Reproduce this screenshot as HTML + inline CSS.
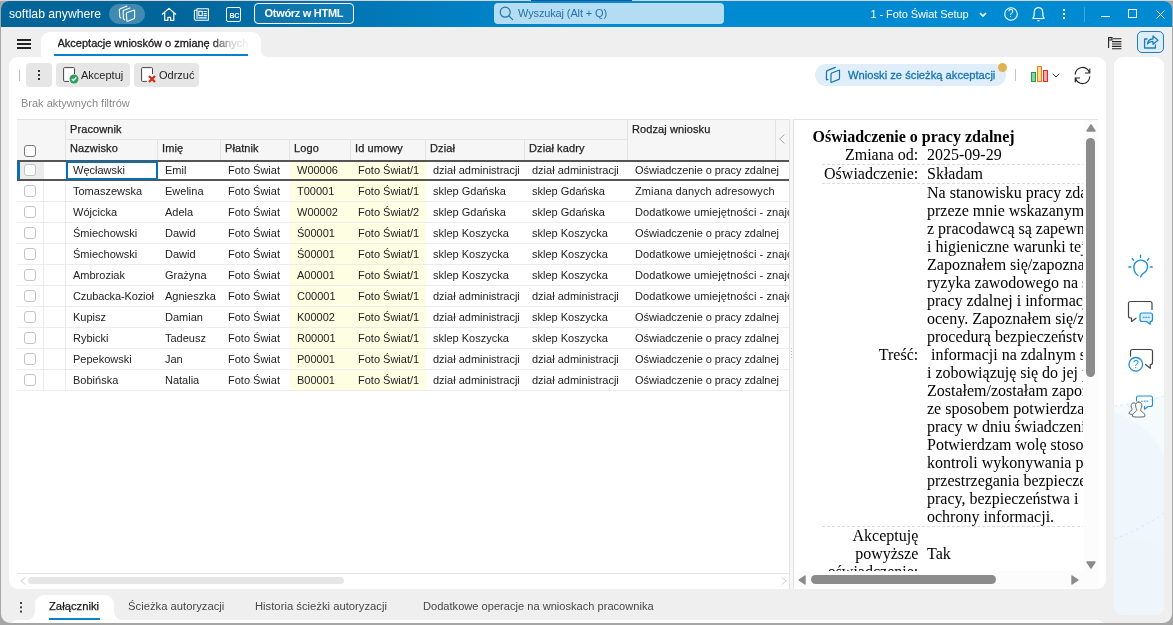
<!DOCTYPE html>
<html lang="pl">
<head>
<meta charset="utf-8">
<title>softlab anywhere</title>
<style>
*{box-sizing:border-box;margin:0;padding:0}
html,body{width:1173px;height:625px;overflow:hidden;background:#a6a6a6}
body{font-family:"Liberation Sans",sans-serif;font-size:11px;color:#222;position:relative}
.abs{position:absolute}
#win{will-change:transform;position:absolute;left:1px;top:1px;width:1171px;height:622px;background:#efefef;border-radius:8px 8px 9px 9px;overflow:hidden;}
#hdr{position:absolute;left:0;top:0;width:1171px;height:26px;background:linear-gradient(90deg,#02659a 0,#02659a 170px,#008ad2 570px,#008ad2 100%)}
#hdr .t{position:absolute;color:#fff;white-space:nowrap}
svg{position:absolute;overflow:visible}
.panel{position:absolute;background:#fff;border-radius:9px}
.tbtn{position:absolute;top:62px;height:24px;background:#e6e6e6;border-radius:4px;font-size:11px;color:#222;white-space:nowrap}
.tbtn span{position:absolute;top:6px}
/* grid */
#grid{position:absolute;left:16px;top:118px;width:773px;height:272px;font-size:11px}
.hc{position:absolute;-webkit-text-stroke:.25px #222;letter-spacing:.1px;background:#f6f6f6;border-right:1px solid #e3e3e3;border-bottom:1px solid #e3e3e3;color:#222;white-space:nowrap;overflow:hidden;padding-left:4px}
.row{position:absolute;left:0;width:773px;height:21px;border-bottom:1px solid #ececec;background:#fff}
.c{position:absolute;top:0;height:20px;line-height:20px;white-space:nowrap;overflow:hidden;padding-left:7px;color:#222}
.y{background:#fefee2}
.cb{position:absolute;left:7px;top:4px;width:12px;height:12px;border:1px solid #c4c4c4;border-radius:3px;background:#fff}
.btab{position:absolute;top:599px;font-size:11.25px;color:#484848;white-space:nowrap}
/* doc */
#doc{position:absolute;left:793px;top:119px;width:289px;height:451px;overflow:hidden;font-family:"Liberation Serif",serif;font-size:16px;color:#000;line-height:18px;background:#fff}
#doc .l{position:absolute;right:164.75px;text-align:right;white-space:nowrap}
#doc .v{position:absolute;left:133px;white-space:nowrap}
#doc .d{position:absolute;left:28px;width:270px;height:1px;background:repeating-linear-gradient(90deg,#dcdcdc 0,#dcdcdc 3px,transparent 3px,transparent 5px)}
</style>
</head>
<body>
<div class="abs" style="left:0;top:0;width:1173px;height:1px;background:linear-gradient(90deg,#d6d3d0 0,#d6d3d0 531px,#1d5596 531px,#1d5596 632px,#d6d3d0 632px)"></div>
<div id="win">
  <div id="hdr">
    <div class="t" style="left:8px;top:6px;font-size:12.2px">softlab anywhere</div>
    <div class="abs" style="left:108px;top:3px;width:36px;height:20px;border-radius:10px;background:rgba(255,255,255,.25)"></div>
    <svg style="left:0;top:0" width="150" height="26" viewBox="1 1 150 26" fill="none" stroke="#fff" stroke-width="1.1" stroke-linejoin="round" stroke-linecap="round">
      <path d="M126.9 6.1 L120.3 8.7 Q119.2 9.2 119.3 10.3 L119.8 16.8 Q119.9 17.8 121 18"/>
      <path d="M129.9 8 L124 10.3 Q123 10.8 123.1 11.8 L123.4 18.4 Q123.5 19.5 124.8 19.7"/>
      <path d="M127.2 12.5 L133.6 10.2 Q134.6 9.9 134.6 11 L134.6 17.7 Q134.6 18.5 133.8 18.8 L127.8 21.2 Q126.9 21.5 126.8 20.5 L126.3 13.7 Q126.2 12.8 127.2 12.5 Z"/>
    </svg>
    <svg style="left:0;top:0" width="260" height="26" viewBox="1 1 260 26" fill="none" stroke="#fff" stroke-width="1.2" stroke-linejoin="round" stroke-linecap="round">
      <path d="M162.3 14.2 L169 8.4 L175.7 14.2 M164.7 13 V20.3 H167.9 V17.3 H170.6 V20.3 H173.8 V13"/>
      <path d="M197 8.7 H208.4 V20.3 H195.8 A1.6 1.6 0 0 1 194.4 18.8 V10.3 H197 M197 8.7 V18.5" stroke-width="1.1"/>
      <rect x="198.8" y="11.3" width="3.4" height="4.3" stroke-width="1.1" stroke-linejoin="miter"/>
      <path d="M203.6 11.5 H206.8 M203.6 13.6 H206.8 M203.6 15.7 H206.8 M198.3 17.9 H206.8" stroke-width="1.2" stroke-linecap="butt"/>
    </svg>
    <div class="abs" style="left:225px;top:6px;width:15px;height:15px;border:1.2px solid #fff;border-radius:2px"></div>
    <div class="t" style="left:228.5px;top:10.5px;font-size:7px;font-weight:bold;letter-spacing:-.3px">BC</div>
    <div class="abs" style="left:253px;top:2px;width:100px;height:21px;border:1px solid #fff;border-radius:4px;background:rgba(255,255,255,.05)"></div>
    <div class="t" style="left:263.5px;top:6px;font-size:11px;font-weight:bold;letter-spacing:-.29px">Otwórz w HTML</div>
    <div class="abs" style="left:493px;top:2px;width:230px;height:21px;border-radius:4px;background:#b4dcf3"></div>
    <svg style="left:498px;top:5px" width="15" height="15" viewBox="0 0 15 15" fill="none" stroke="#2773a8" stroke-width="1.2" stroke-linecap="round">
      <circle cx="6.2" cy="6.2" r="5"/><path d="M9.9 9.9 L13.6 13.6"/>
    </svg>
    <div class="t" style="left:517px;top:6px;font-size:11px;color:#2773a8;letter-spacing:-.13px">Wyszukaj (Alt + Q)</div>
    <div class="t" style="left:869.5px;top:7px;font-size:11px;letter-spacing:-.08px">1 - Foto Świat Setup</div>
    <svg style="left:978px;top:11px" width="8" height="6" viewBox="0 0 8 6" fill="none" stroke="#fff" stroke-width="1.6"><path d="M1 1 L4 4 L7 1"/></svg>
    <svg style="left:1003px;top:6px" width="14" height="14" viewBox="0 0 14 14" fill="none" stroke="#fff" stroke-width="1.1"><circle cx="7" cy="7" r="6.3"/></svg>
    <div class="t" style="left:1007px;top:7px;font-size:10px">?</div>
    <svg style="left:1031px;top:5px" width="13" height="17" viewBox="0 0 13 17" fill="none" stroke="#fff" stroke-width="1.2" stroke-linejoin="round">
      <path d="M1 12.5 H12 V12 C10.8 11 10.8 9.5 10.8 7 C10.8 3.8 9 1.6 6.5 1.6 C4 1.6 2.2 3.8 2.2 7 C2.2 9.5 2.2 11 1 12 Z"/>
      <path d="M5.5 14.6 H7.5" stroke-width="1.4"/>
    </svg>
    <div class="abs" style="left:1062px;top:8px;width:2px;height:2px;background:#fff;box-shadow:0 4px 0 #fff,0 8px 0 #fff"></div>
    <div class="abs" style="left:1083px;top:6px;width:1px;height:15px;background:rgba(255,255,255,.25)"></div>
    <div class="abs" style="left:1100px;top:15px;width:9px;height:1px;background:#fff"></div>
    <div class="abs" style="left:1127px;top:8px;width:9px;height:9px;border:1px solid #fff"></div>
    <svg style="left:1155px;top:9px" width="9" height="9" viewBox="0 0 9 9" stroke="#fff" stroke-width="1"><path d="M0.5 0.5 L8.5 8.5 M8.5 0.5 L0.5 8.5"/></svg>
  </div>
  <!--TABS-->
  <div class="abs" style="left:16px;top:38px;width:14px;height:2px;background:#222;box-shadow:0 4px 0 #222,0 8px 0 #222"></div>
  <div class="abs" style="left:40px;top:31px;width:220px;height:30px;background:#fff;border-radius:9px 9px 0 0"></div>
  <div class="abs" style="left:260px;top:50px;width:6px;height:6px;background:radial-gradient(circle at 100% 0,#efefef 5.5px,#fff 6px)"></div>
  <div class="abs" id="tabt" style="left:56.5px;top:36px;font-size:11px;color:#1a1a1a;white-space:nowrap;-webkit-text-stroke:.3px #1a1a1a;width:192px;overflow:hidden;-webkit-mask-image:linear-gradient(90deg,#000 0,#000 80%,rgba(0,0,0,.25) 90%,rgba(0,0,0,.03) 100%)">Akceptacje wniosków o zmianę danych</div>
  <div class="abs" style="left:53px;top:53px;width:194px;height:2px;background:#0a80c8"></div>
  <svg style="left:1107.2px;top:36.3px" width="14" height="13" viewBox="0 0 14 13" fill="none" stroke="#222" stroke-width="1.1">
    <path d="M0.6 11 V0.6 H4 V3 H0.6 M5 1.8 H13.4 M4 4.6 H13.4 M4 7 H13.4 M4 9.4 H13.4 M4 11.8 H13.4"/>
  </svg>
  <div class="abs" style="left:1136px;top:30px;width:27px;height:22px;border:1px solid #1b7fbd;border-radius:5px;background:#dcedf8"></div>
  <svg style="left:1142px;top:33px" width="16" height="15" viewBox="0 0 16 15" fill="none" stroke="#1b7fbd" stroke-width="1.3" stroke-linejoin="round">
    <path d="M4.5 5 H1.6 V14 H12.4 V10.5"/>
    <path d="M4.6 10 C4.8 6.5 7 5 10 5 V2 L15 6.2 L10 10.2 V7.4 C7.6 7.4 6 8 4.6 10 Z"/>
  </svg>
  <!--MAIN-->
  <div class="panel" style="left:8px;top:56px;width:1097px;height:532px"></div>
  <div class="panel" style="left:1113px;top:56px;width:50px;height:558px;overflow:hidden">
    <svg style="left:0;top:0" width="50" height="558" viewBox="1114 57 50 558" fill="none">
      <path d="M1114 406 Q1140 403 1164 396 V615 H1114 Z" fill="#f5fafd"/>
      <path d="M1114 412 Q1150 425 1164 456 V615 H1114 Z" fill="#f0f7fc"/>
      <path d="M1114 534 Q1140 538 1164 548 V615 H1114 Z" fill="#eef6fc"/>
      <path d="M1114 406 Q1140 403 1164 396" stroke="#d3e9f6" stroke-width="1" stroke-dasharray="3 3"/>
      <path d="M1114 539 Q1140 530 1164 513" stroke="#d3e9f6" stroke-width="1" stroke-dasharray="3 3"/>
    </svg>
  </div>
  <!--TOOLBAR-->
  <div class="abs" style="left:18px;top:69px;width:1px;height:11px;background:#bbb"></div>
  <div class="tbtn" style="left:25px;width:26px"></div>
  <div class="abs" style="left:37px;top:69px;width:2px;height:2px;background:#333;box-shadow:0 4px 0 #333,0 8px 0 #333"></div>
  <div class="tbtn" style="left:55px;width:74px"><span style="left:25px">Akceptuj</span></div>
  <svg style="left:62px;top:66px" width="16" height="17" viewBox="0 0 16 17" fill="none">
    <rect x="0.6" y="0.6" width="10.9" height="13.8" rx="1" fill="#fff"/><path d="M11.5 7 V1.6 A1 1 0 0 0 10.5 0.6 H1.6 A1 1 0 0 0 0.6 1.6 V13.4 A1 1 0 0 0 1.6 14.4 H6" stroke="#444" stroke-width="1"/>
    <circle cx="11" cy="12" r="4.5" fill="#2e9e5b"/>
    <path d="M8.8 12 L10.4 13.6 L13.3 10.5" stroke="#fff" stroke-width="1.4"/>
  </svg>
  <div class="tbtn" style="left:133px;width:65px"><span style="left:25px">Odrzuć</span></div>
  <svg style="left:140px;top:66px" width="16" height="17" viewBox="0 0 16 17" fill="none">
    <rect x="0.6" y="0.6" width="10.9" height="13.8" rx="1" fill="#fff"/><path d="M11.5 7 V1.6 A1 1 0 0 0 10.5 0.6 H1.6 A1 1 0 0 0 0.6 1.6 V13.4 A1 1 0 0 0 1.6 14.4 H6" stroke="#444" stroke-width="1"/>
    <path d="M8 9 L14 15 M14 9 L8 15" stroke="#d22e18" stroke-width="2.2"/>
  </svg>
  <div class="abs" style="left:813.5px;top:63px;width:191px;height:22px;border-radius:11px;background:#dfeef8"></div>
  <svg style="left:0;top:0" width="900" height="100" viewBox="1 1 900 100" fill="none" stroke="#1474b4" stroke-width="1.2" stroke-linejoin="round" stroke-linecap="round">
    <path d="M835.3 67.4 L827.3 70.6 Q826.5 71 826.5 71.9 L826.4 79.2 Q826.4 80 827.2 79.7 L828 79.4"/>
    <path d="M831.8 73 L838.8 70.2 Q839.5 69.9 839.5 70.7 L839.5 78.4 Q839.5 79.1 838.8 79.4 L831.7 82.3 Q830.9 82.6 830.9 81.8 L831.1 74 Q831.1 73.3 831.8 73 Z"/>
  </svg>
  <div class="abs" style="left:847px;top:67.6px;font-size:11.2px;color:#1474b4;white-space:nowrap;-webkit-text-stroke:.3px #1474b4">Wnioski ze ścieżką akceptacji</div>
  <div class="abs" style="left:997px;top:62px;width:9px;height:9px;border-radius:50%;background:#e0b252"></div>
  <div class="abs" style="left:1014px;top:68px;width:1px;height:12px;background:#c8c8c8"></div>
  <div class="abs" style="left:1030px;top:71px;width:5px;height:10px;border:1px solid #13a04a;background:#8fd0a3"></div>
  <div class="abs" style="left:1036px;top:65px;width:5px;height:16px;border:1px solid #ef7d1a;background:#fbe08a"></div>
  <div class="abs" style="left:1042px;top:69px;width:5px;height:12px;border:1px solid #e22a2a;background:#f2a9a9"></div>
  <svg style="left:1051px;top:72px" width="8" height="5" viewBox="0 0 8 5" fill="none" stroke="#333" stroke-width="1"><path d="M0.7 0.7 L4 4 L7.3 0.7"/></svg>
  <svg style="left:1073px;top:66px" width="17" height="17" viewBox="0 0 17 17" fill="none" stroke="#222" stroke-width="1.1">
    <path d="M1.2 7.5 A7.3 7.3 0 0 1 15.6 6 M15.8 1.5 V6 H11"/>
    <path d="M15.8 9.5 A7.3 7.3 0 0 1 1.4 11 M1.2 15.5 V11 H6"/>
  </svg>
  <div class="abs" style="left:20px;top:96px;font-size:11px;color:#8a8a8a;white-space:nowrap">Brak aktywnych filtrów</div>
  <!--GRID-->
  <div id="grid">
  <div class="hc" style="left:0;top:0;width:49px;height:42px;border-top:1px solid #e3e3e3"></div>
  <div class="hc" style="left:49px;top:0;width:562px;height:21px;border-top:1px solid #e3e3e3;line-height:19px">Pracownik</div>
  <div class="hc" style="left:49px;top:21px;width:92px;height:21px;line-height:17px">Nazwisko</div>
  <div class="hc" style="left:141px;top:21px;width:63px;height:21px;line-height:17px">Imię</div>
  <div class="hc" style="left:204px;top:21px;width:69px;height:21px;line-height:17px">Płatnik</div>
  <div class="hc" style="left:273px;top:21px;width:61px;height:21px;line-height:17px">Logo</div>
  <div class="hc" style="left:334px;top:21px;width:75px;height:21px;line-height:17px">Id umowy</div>
  <div class="hc" style="left:409px;top:21px;width:99px;height:21px;line-height:17px">Dział</div>
  <div class="hc" style="left:508px;top:21px;width:103px;height:21px;line-height:17px">Dział kadry</div>
  <div class="hc" style="left:611px;top:0;width:148px;height:42px;border-top:1px solid #e3e3e3;line-height:19px">Rodzaj wniosku</div>
  <div class="hc" style="left:759px;top:0;width:14px;height:42px;border-top:1px solid #e3e3e3;border-right:0"></div>
  <svg style="left:762px;top:15px" width="6" height="10" viewBox="0 0 6 10" fill="none" stroke="#aaa" stroke-width="1"><path d="M5.5 0.5 L0.8 5 L5.5 9.5"/></svg>
  <div class="cb" style="left:7px;top:26px;border-color:#7a7a7a"></div>
  <div class="row" style="top:41px">
  <div class="abs" style="left:26px;top:0;width:1px;height:20px;background:#ececec"></div><div class="abs" style="left:48px;top:0;width:1px;height:20px;background:#ececec"></div>
  <div class="abs" style="left:3px;top:0;width:23px;height:20px;background:#ececec"></div>
  <div class="cb"></div>
  <div class="c" style="left:49px;width:92px">Węcławski</div>
  <div class="c" style="left:141px;width:63px">Emil</div>
  <div class="c" style="left:204px;width:69px">Foto Świat</div>
  <div class="c y" style="left:273px;width:61px">W00006</div>
  <div class="c y" style="left:334px;width:75px">Foto Świat/1</div>
  <div class="c" style="left:409px;width:99px">dział administracji</div>
  <div class="c" style="left:508px;width:103px">dział administracji</div>
  <div class="c" style="left:611px;width:162px;letter-spacing:-.06px">Oświadczenie o pracy zdalnej</div>
  </div>
  <div class="row" style="top:62px">
  <div class="abs" style="left:26px;top:0;width:1px;height:20px;background:#ececec"></div><div class="abs" style="left:48px;top:0;width:1px;height:20px;background:#ececec"></div>
  <div class="cb"></div>
  <div class="c" style="left:49px;width:92px">Tomaszewska</div>
  <div class="c" style="left:141px;width:63px">Ewelina</div>
  <div class="c" style="left:204px;width:69px">Foto Świat</div>
  <div class="c y" style="left:273px;width:61px">T00001</div>
  <div class="c y" style="left:334px;width:75px">Foto Świat/1</div>
  <div class="c" style="left:409px;width:99px">sklep Gdańska</div>
  <div class="c" style="left:508px;width:103px">sklep Gdańska</div>
  <div class="c" style="left:611px;width:162px;letter-spacing:.12px">Zmiana danych adresowych</div>
  </div>
  <div class="row" style="top:83px">
  <div class="abs" style="left:26px;top:0;width:1px;height:20px;background:#ececec"></div><div class="abs" style="left:48px;top:0;width:1px;height:20px;background:#ececec"></div>
  <div class="cb"></div>
  <div class="c" style="left:49px;width:92px">Wójcicka</div>
  <div class="c" style="left:141px;width:63px">Adela</div>
  <div class="c" style="left:204px;width:69px">Foto Świat</div>
  <div class="c y" style="left:273px;width:61px">W00002</div>
  <div class="c y" style="left:334px;width:75px">Foto Świat/2</div>
  <div class="c" style="left:409px;width:99px">sklep Gdańska</div>
  <div class="c" style="left:508px;width:103px">sklep Gdańska</div>
  <div class="c" style="left:611px;width:162px;letter-spacing:.1px">Dodatkowe umiejętności - znajomość języków</div>
  </div>
  <div class="row" style="top:104px">
  <div class="abs" style="left:26px;top:0;width:1px;height:20px;background:#ececec"></div><div class="abs" style="left:48px;top:0;width:1px;height:20px;background:#ececec"></div>
  <div class="cb"></div>
  <div class="c" style="left:49px;width:92px">Śmiechowski</div>
  <div class="c" style="left:141px;width:63px">Dawid</div>
  <div class="c" style="left:204px;width:69px">Foto Świat</div>
  <div class="c y" style="left:273px;width:61px">Ś00001</div>
  <div class="c y" style="left:334px;width:75px">Foto Świat/1</div>
  <div class="c" style="left:409px;width:99px">sklep Koszycka</div>
  <div class="c" style="left:508px;width:103px">sklep Koszycka</div>
  <div class="c" style="left:611px;width:162px;letter-spacing:-.06px">Oświadczenie o pracy zdalnej</div>
  </div>
  <div class="row" style="top:125px">
  <div class="abs" style="left:26px;top:0;width:1px;height:20px;background:#ececec"></div><div class="abs" style="left:48px;top:0;width:1px;height:20px;background:#ececec"></div>
  <div class="cb"></div>
  <div class="c" style="left:49px;width:92px">Śmiechowski</div>
  <div class="c" style="left:141px;width:63px">Dawid</div>
  <div class="c" style="left:204px;width:69px">Foto Świat</div>
  <div class="c y" style="left:273px;width:61px">Ś00001</div>
  <div class="c y" style="left:334px;width:75px">Foto Świat/1</div>
  <div class="c" style="left:409px;width:99px">sklep Koszycka</div>
  <div class="c" style="left:508px;width:103px">sklep Koszycka</div>
  <div class="c" style="left:611px;width:162px;letter-spacing:.1px">Dodatkowe umiejętności - znajomość języków</div>
  </div>
  <div class="row" style="top:146px">
  <div class="abs" style="left:26px;top:0;width:1px;height:20px;background:#ececec"></div><div class="abs" style="left:48px;top:0;width:1px;height:20px;background:#ececec"></div>
  <div class="cb"></div>
  <div class="c" style="left:49px;width:92px">Ambroziak</div>
  <div class="c" style="left:141px;width:63px">Grażyna</div>
  <div class="c" style="left:204px;width:69px">Foto Świat</div>
  <div class="c y" style="left:273px;width:61px">A00001</div>
  <div class="c y" style="left:334px;width:75px">Foto Świat/1</div>
  <div class="c" style="left:409px;width:99px">sklep Koszycka</div>
  <div class="c" style="left:508px;width:103px">sklep Koszycka</div>
  <div class="c" style="left:611px;width:162px;letter-spacing:.1px">Dodatkowe umiejętności - znajomość języków</div>
  </div>
  <div class="row" style="top:167px">
  <div class="abs" style="left:26px;top:0;width:1px;height:20px;background:#ececec"></div><div class="abs" style="left:48px;top:0;width:1px;height:20px;background:#ececec"></div>
  <div class="cb"></div>
  <div class="c" style="left:49px;width:92px;letter-spacing:-.12px">Czubacka-Kozioł</div>
  <div class="c" style="left:141px;width:63px">Agnieszka</div>
  <div class="c" style="left:204px;width:69px">Foto Świat</div>
  <div class="c y" style="left:273px;width:61px">C00001</div>
  <div class="c y" style="left:334px;width:75px">Foto Świat/1</div>
  <div class="c" style="left:409px;width:99px">dział administracji</div>
  <div class="c" style="left:508px;width:103px">dział administracji</div>
  <div class="c" style="left:611px;width:162px;letter-spacing:.1px">Dodatkowe umiejętności - znajomość języków</div>
  </div>
  <div class="row" style="top:188px">
  <div class="abs" style="left:26px;top:0;width:1px;height:20px;background:#ececec"></div><div class="abs" style="left:48px;top:0;width:1px;height:20px;background:#ececec"></div>
  <div class="cb"></div>
  <div class="c" style="left:49px;width:92px">Kupisz</div>
  <div class="c" style="left:141px;width:63px">Damian</div>
  <div class="c" style="left:204px;width:69px">Foto Świat</div>
  <div class="c y" style="left:273px;width:61px">K00002</div>
  <div class="c y" style="left:334px;width:75px">Foto Świat/1</div>
  <div class="c" style="left:409px;width:99px">dział administracji</div>
  <div class="c" style="left:508px;width:103px">sklep Koszycka</div>
  <div class="c" style="left:611px;width:162px;letter-spacing:-.06px">Oświadczenie o pracy zdalnej</div>
  </div>
  <div class="row" style="top:209px">
  <div class="abs" style="left:26px;top:0;width:1px;height:20px;background:#ececec"></div><div class="abs" style="left:48px;top:0;width:1px;height:20px;background:#ececec"></div>
  <div class="cb"></div>
  <div class="c" style="left:49px;width:92px">Rybicki</div>
  <div class="c" style="left:141px;width:63px">Tadeusz</div>
  <div class="c" style="left:204px;width:69px">Foto Świat</div>
  <div class="c y" style="left:273px;width:61px">R00001</div>
  <div class="c y" style="left:334px;width:75px">Foto Świat/1</div>
  <div class="c" style="left:409px;width:99px">sklep Koszycka</div>
  <div class="c" style="left:508px;width:103px">sklep Koszycka</div>
  <div class="c" style="left:611px;width:162px;letter-spacing:-.06px">Oświadczenie o pracy zdalnej</div>
  </div>
  <div class="row" style="top:230px">
  <div class="abs" style="left:26px;top:0;width:1px;height:20px;background:#ececec"></div><div class="abs" style="left:48px;top:0;width:1px;height:20px;background:#ececec"></div>
  <div class="cb"></div>
  <div class="c" style="left:49px;width:92px">Pepekowski</div>
  <div class="c" style="left:141px;width:63px">Jan</div>
  <div class="c" style="left:204px;width:69px">Foto Świat</div>
  <div class="c y" style="left:273px;width:61px">P00001</div>
  <div class="c y" style="left:334px;width:75px">Foto Świat/1</div>
  <div class="c" style="left:409px;width:99px">dział administracji</div>
  <div class="c" style="left:508px;width:103px">dział administracji</div>
  <div class="c" style="left:611px;width:162px;letter-spacing:-.06px">Oświadczenie o pracy zdalnej</div>
  </div>
  <div class="row" style="top:251px">
  <div class="abs" style="left:26px;top:0;width:1px;height:20px;background:#ececec"></div><div class="abs" style="left:48px;top:0;width:1px;height:20px;background:#ececec"></div>
  <div class="cb"></div>
  <div class="c" style="left:49px;width:92px">Bobińska</div>
  <div class="c" style="left:141px;width:63px">Natalia</div>
  <div class="c" style="left:204px;width:69px">Foto Świat</div>
  <div class="c y" style="left:273px;width:61px">B00001</div>
  <div class="c y" style="left:334px;width:75px">Foto Świat/1</div>
  <div class="c" style="left:409px;width:99px">dział administracji</div>
  <div class="c" style="left:508px;width:103px">dział administracji</div>
  <div class="c" style="left:611px;width:162px;letter-spacing:-.06px">Oświadczenie o pracy zdalnej</div>
  </div>
  <div class="abs" style="left:0;top:41px;width:773px;height:2px;background:#555"></div>
  <div class="abs" style="left:0;top:60px;width:773px;height:2px;background:#555"></div>
  <div class="abs" style="left:0;top:43px;width:3px;height:17px;background:#0a6fae"></div>
  <div class="abs" style="left:49px;top:42px;width:92px;height:19px;border:2px solid #0a6fae"></div>
  </div>
  <!--/GRID-->
  <!--DOC-->
  <div class="abs" style="left:788px;top:118px;width:5px;height:470px;background:#f7f7f7;border-left:1px solid #e3e3e3;border-right:1px solid #e3e3e3"></div>
  <div class="abs" style="left:790px;top:347px;width:1px;height:12px;background:repeating-linear-gradient(180deg,#bbb 0,#bbb 1px,transparent 1px,transparent 3px)"></div>
  <div class="abs" style="left:793px;top:118px;width:304px;height:1px;background:#e3e3e3"></div>
  <div id="doc">
  <div class="abs" style="left:18.5px;top:8px;font-weight:bold;white-space:nowrap">Oświadczenie o pracy zdalnej</div>
  <div class="l" style="top:26px">Zmiana od:</div><div class="v" style="top:26px">2025-09-29</div>
  <div class="d" style="top:44px"></div>
  <div class="l" style="top:45px">Oświadczenie:</div><div class="v" style="top:45px">Składam</div>
  <div class="d" style="top:63px"></div>
  <div class="l" style="top:226px">Treść:</div>
  <div class="v" style="top:64px">Na stanowisku pracy zdalnej w miejscu<br>przeze mnie wskazanym i uzgodnionym<br>z pracodawcą są zapewnione bezpieczne<br>i higieniczne warunki tej pracy.<br>Zapoznałem się/zapoznałam się z oceną<br>ryzyka zawodowego na stanowisku<br>pracy zdalnej i informacją zawierającą zasady<br>oceny. Zapoznałem się/zapoznałam się z<br>procedurą bezpieczeństwa ochrony<br>&nbsp;informacji na zdalnym stanowisku pracy<br>i zobowiązuję się do jej przestrzegania.<br>Zostałem/zostałam zapoznany/zapoznana<br>ze sposobem potwierdzania obecności w<br>pracy w dniu świadczenia pracy zdalnej.<br>Potwierdzam wolę stosowania zasad<br>kontroli wykonywania pracy zdalnej,<br>przestrzegania bezpieczeństwa i higieny<br>pracy, bezpieczeństwa i<br>ochrony informacji.</div>
  <div class="d" style="top:406px"></div>
  <div class="l" style="top:407px">Akceptuję<br>powyższe<br>oświadczenie:</div><div class="v" style="top:425px">Tak</div>
  </div>
  <div class="abs" style="left:1083px;top:119px;width:14px;height:468px;background:#fcfcfc"></div>
  <div class="abs" style="left:793px;top:570px;width:304px;height:17px;background:#fcfcfc;border-radius:0 0 8px 0"></div>
  <svg style="left:1085px;top:123px" width="10" height="8" viewBox="0 0 10 8"><path d="M5 1 L9 7 H1 Z" fill="#8b8b8b" stroke="#8b8b8b" stroke-width="1.4" stroke-linejoin="round"/></svg>
  <div class="abs" style="left:1085px;top:137px;width:9px;height:239px;border-radius:5px;background:#8b8b8b"></div>
  <svg style="left:1085px;top:560px" width="10" height="8" viewBox="0 0 10 8"><path d="M5 7 L9 1 H1 Z" fill="#8b8b8b" stroke="#8b8b8b" stroke-width="1.4" stroke-linejoin="round"/></svg>
  <svg style="left:797px;top:574px" width="8" height="10" viewBox="0 0 8 10"><path d="M1 5 L7 1 V9 Z" fill="#8b8b8b" stroke="#8b8b8b" stroke-width="1.4" stroke-linejoin="round"/></svg>
  <div class="abs" style="left:810px;top:574px;width:185px;height:9px;border-radius:5px;background:#8b8b8b"></div>
  <svg style="left:1070px;top:574px" width="8" height="10" viewBox="0 0 8 10"><path d="M7 5 L1 1 V9 Z" fill="#8b8b8b" stroke="#8b8b8b" stroke-width="1.4" stroke-linejoin="round"/></svg>
  <div class="abs" style="left:16px;top:572px;width:773px;height:1px;background:#e6e6e6"></div>
  <svg style="left:19px;top:576px" width="6" height="8" viewBox="0 0 6 8" fill="none" stroke="#d0d0d0" stroke-width="1"><path d="M5.3 0.5 L0.8 4 L5.3 7.5"/></svg>
  <div class="abs" style="left:27px;top:576px;width:316px;height:7px;border-radius:4px;background:#e6e6e6"></div>
  <svg style="left:780px;top:576px" width="6" height="8" viewBox="0 0 6 8" fill="none" stroke="#d0d0d0" stroke-width="1"><path d="M0.7 0.5 L5.2 4 L0.7 7.5"/></svg>
  <div class="abs" style="left:19px;top:601px;width:2px;height:2px;background:#444;box-shadow:0 4.3px 0 #444,0 8.6px 0 #444"></div>
  <div class="abs" style="left:34px;top:594px;width:79px;height:30px;background:#fff;border-radius:9px 9px 0 0"></div>
  <div class="abs" style="left:26px;top:611px;width:8px;height:8px;background:radial-gradient(circle at 0 0,#efefef 7.5px,#fff 8px)"></div>
  <div class="abs" style="left:113px;top:611px;width:8px;height:8px;background:radial-gradient(circle at 100% 0,#efefef 7.5px,#fff 8px)"></div>
  <div class="panel" style="left:8px;top:619px;width:1097px;height:20px"></div>
  <div class="btab" style="left:48px;color:#1a1a1a;-webkit-text-stroke:.25px #1a1a1a">Załączniki</div>
  <div class="abs" style="left:48px;top:617px;width:51px;height:2px;background:#0a80c8"></div>
  <div class="btab" style="left:127px">Ścieżka autoryzacji</div>
  <div class="btab" style="left:254px">Historia ścieżki autoryzacji</div>
  <div class="btab" style="left:422px;font-size:11.1px">Dodatkowe operacje na wnioskach pracownika</div>
  <!--/DOC-->
  <!--SIDE-->
  <svg style="left:1113px;top:56px" width="50" height="545" viewBox="1114 57 50 545" fill="none" stroke-linecap="round" stroke-linejoin="round">
    <!-- bulb -->
    <g stroke="#1a8fd8" stroke-width="1.4">
      <path d="M1138 275.5 C1133 272.5 1132.5 264 1137 261.3 C1142 258.3 1148 262 1147.5 267 C1147.2 271 1145 272.5 1142.5 273.8 L1140.5 276.8"/>
      <path d="M1140.5 255.2 V257.4 M1132.2 258.8 L1133.6 260.2 M1148.8 258.8 L1147.4 260.2 M1128.8 267 H1130.8 M1150.2 267 H1152.2"/>
    </g>
    <!-- chat 1 -->
    <path d="M1152 309.5 V303.5 A2 2 0 0 0 1150 301.5 H1130.5 A2 2 0 0 0 1128.5 303.5 V316 A2 2 0 0 0 1130.5 318 H1131.5 V321.5 L1136 318.2" stroke="#444" stroke-width="1.2"/>
    <path d="M1142 313 H1150.5 A2 2 0 0 1 1152.5 315 V319.5 A2 2 0 0 1 1150.5 321.5 H1150.2 V324.2 L1146.5 321.5 H1142 A2 2 0 0 1 1140 319.5 V315 A2 2 0 0 1 1142 313 Z" stroke="#1a8fd8" stroke-width="1.2" fill="#d9edfa"/>
    <path d="M1143.3 317.3 H1144.3 M1145.8 317.3 H1146.8 M1148.3 317.3 H1149.3" stroke="#1a8fd8" stroke-width="1.1"/>
    <!-- chat 2 -->
    <path d="M1130.5 356 V351.5 A2 2 0 0 1 1132.5 349.5 H1150.5 A2 2 0 0 1 1152.5 351.5 V362.5 A2 2 0 0 1 1150.5 364.5 H1150.3 V368.3 L1145.5 364.5" stroke="#444" stroke-width="1.2"/>
    <circle cx="1135.8" cy="364.3" r="6.8" stroke="#1a8fd8" stroke-width="1.3" fill="#fff"/>
    <!-- people chat -->
    <path d="M1136.5 401 V398 A2 2 0 0 1 1138.5 396 H1150.5 A2 2 0 0 1 1152.5 398 V404.5 A2 2 0 0 1 1150.5 406.5 H1148 L1144.5 409.2 V406.5" stroke="#1a8fd8" stroke-width="1.1"/>
    <path d="M1141.5 401.2 H1142.3 M1144.2 401.2 H1145 M1146.9 401.2 H1147.7" stroke="#1a8fd8" stroke-width="1"/>
    <path d="M1135.3 403.3 C1133.2 402 1130.8 403.5 1131.1 406 C1131.3 407.8 1132.1 408.5 1132.1 409.4 C1132.1 410.8 1129.2 411 1129 413.3 C1129.3 414.2 1130.5 414.4 1131.8 414.4" stroke="#555" stroke-width="0.9"/>
    <path d="M1138.7 402 C1141 402 1142 403.8 1141.8 406 C1141.6 408 1140.6 409 1140.6 410.2 C1140.6 412 1145 412 1145 416.3 C1145 417.3 1132.4 417.3 1132.4 416.3 C1132.4 412 1136.8 412 1136.8 410.2 C1136.8 409 1135.8 408 1135.6 406 C1135.4 403.8 1136.4 402 1138.7 402 Z" stroke="#555" stroke-width="0.9" fill="#fff"/>
    <text x="1135.8" y="368" font-family="Liberation Sans, sans-serif" font-size="10.5" fill="#1a8fd8" text-anchor="middle" stroke="none">?</text>
  </svg>
  <!--/SIDE-->
</div>
</body>
</html>
